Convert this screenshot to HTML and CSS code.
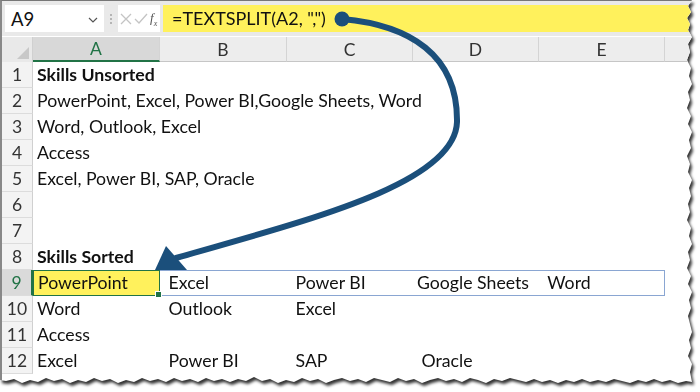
FILE: index.html
```html
<!DOCTYPE html>
<html>
<head>
<meta charset="utf-8">
<link rel="stylesheet" href="styles.css">
</head>
<body>
<div class="page">
  <div class="sheet">
    <div class="topbar">
      <div class="namebox"><span class="ref">A9</span><svg class="chev" width="10" height="6" viewBox="0 0 10 6"><path d="M1 1 L5 5 L9 1" fill="none" stroke="#555" stroke-width="1.2"/></svg></div>
      <div class="grip"><i></i><i></i><i></i></div>
      <div class="fxbox">
        <svg width="14" height="14" viewBox="0 0 14 14"><path d="M2 2 L12 12 M12 2 L2 12" stroke="#c4c4c4" stroke-width="1.3"/></svg>
        <svg width="16" height="14" viewBox="0 0 16 14"><path d="M2 7 L6 11 L14 2" fill="none" stroke="#c4c4c4" stroke-width="1.3"/></svg>
        <span class="fx">f<sub>x</sub></span>
      </div>
      <div class="formula">=TEXTSPLIT(A2, ",")</div>
    </div>
    <div class="grid">
      <div class="corner"></div>
      <div class="ch sel">A</div><div class="ch">B</div><div class="ch">C</div><div class="ch">D</div><div class="ch">E</div><div class="ch last"></div>

      <div class="rh">1</div><div class="c b">Skills Unsorted</div><div class="c"></div><div class="c"></div><div class="c"></div><div class="c"></div><div class="c"></div>
      <div class="rh">2</div><div class="c">PowerPoint, Excel, Power BI,Google Sheets, Word</div><div class="c"></div><div class="c"></div><div class="c"></div><div class="c"></div><div class="c"></div>
      <div class="rh">3</div><div class="c">Word, Outlook, Excel</div><div class="c"></div><div class="c"></div><div class="c"></div><div class="c"></div><div class="c"></div>
      <div class="rh">4</div><div class="c">Access</div><div class="c"></div><div class="c"></div><div class="c"></div><div class="c"></div><div class="c"></div>
      <div class="rh">5</div><div class="c">Excel, Power BI, SAP, Oracle</div><div class="c"></div><div class="c"></div><div class="c"></div><div class="c"></div><div class="c"></div>
      <div class="rh">6</div><div class="c"></div><div class="c"></div><div class="c"></div><div class="c"></div><div class="c"></div><div class="c"></div>
      <div class="rh">7</div><div class="c"></div><div class="c"></div><div class="c"></div><div class="c"></div><div class="c"></div><div class="c"></div>
      <div class="rh">8</div><div class="c b">Skills Sorted</div><div class="c"></div><div class="c"></div><div class="c"></div><div class="c"></div><div class="c"></div>
      <div class="rh rsel">9</div><div class="c active">PowerPoint</div><div class="c sp"> Excel</div><div class="c sp"> Power BI</div><div class="c sp">Google Sheets</div><div class="c sp spr"> Word</div><div class="c"></div>
      <div class="rh">10</div><div class="c">Word</div><div class="c"> Outlook</div><div class="c"> Excel</div><div class="c"></div><div class="c"></div><div class="c"></div>
      <div class="rh">11</div><div class="c">Access</div><div class="c"></div><div class="c"></div><div class="c"></div><div class="c"></div><div class="c"></div>
      <div class="rh">12</div><div class="c">Excel</div><div class="c"> Power BI</div><div class="c"> SAP</div><div class="c"> Oracle</div><div class="c"></div><div class="c"></div>
    </div>
  </div>
</div>
<svg class="arrow" width="700" height="392" viewBox="0 0 700 392">
  <path d="M342 19 C 410 25 458 55 457 122 C 455 185 300 222 176 258" fill="none" stroke="#1b4f7b" stroke-width="6" stroke-linecap="round"/>
  <circle cx="342" cy="19" r="7.5" fill="#1b4f7b"/>
  <polygon points="155,270 166,246 187,270" fill="#1b4f7b"/>
</svg>
</body>
</html>
```
FILE: styles.css
```css
html, body {
  margin: 0;
  padding: 0;
  background: #fff;
  width: 700px;
  height: 392px;
  overflow: hidden;
}
body {
  font-family: Lato, "Liberation Sans", sans-serif;
  color: #111;
}
.page {
  width: 700px;
  height: 392px;
  filter: drop-shadow(2px 3px 1.5px rgba(0,0,0,0.8));
}
.sheet {
  width: 694px;
  height: 388px;
  box-sizing: border-box;
  border-top: 1px solid #777;
  border-left: 2px solid #888;
  background: #fff;
  clip-path: polygon(0 0, 692px 0, 688px 6px, 691px 12px, 687px 18px, 690px 24px, 688px 30px, 692px 37px, 688px 44px, 690px 52px, 687px 60px, 691px 68px, 689px 76px, 692px 84px, 688px 92px, 690px 100px, 687px 108px, 691px 116px, 688px 124px, 692px 132px, 689px 140px, 691px 148px, 687px 156px, 690px 164px, 688px 172px, 692px 180px, 689px 188px, 691px 196px, 688px 204px, 690px 212px, 687px 220px, 691px 228px, 689px 236px, 692px 244px, 688px 252px, 690px 260px, 687px 268px, 691px 276px, 688px 284px, 692px 292px, 689px 300px, 691px 308px, 688px 316px, 690px 324px, 692px 332px, 689px 340px, 691px 348px, 688px 356px, 692px 364px, 690px 372px, 692px 382px, 686px 381px, 678px 383px, 670px 380px, 662px 382px, 654px 379px, 646px 382px, 638px 380px, 630px 383px, 622px 381px, 614px 379px, 606px 382px, 598px 380px, 590px 382px, 582px 379px, 574px 382px, 566px 380px, 558px 383px, 550px 380px, 542px 382px, 534px 379px, 526px 382px, 518px 380px, 510px 378px, 502px 381px, 494px 379px, 486px 383px, 478px 380px, 470px 378px, 462px 382px, 454px 379px, 446px 381px, 438px 378px, 430px 380px, 422px 383px, 414px 379px, 406px 381px, 398px 378px, 390px 382px, 382px 380px, 374px 378px, 366px 382px, 358px 379px, 350px 381px, 342px 378px, 334px 380px, 326px 383px, 318px 379px, 310px 381px, 302px 378px, 294px 382px, 286px 380px, 278px 383px, 270px 379px, 262px 381px, 254px 377px, 246px 381px, 238px 379px, 230px 382px, 222px 379px, 214px 381px, 206px 378px, 198px 382px, 190px 379px, 182px 381px, 174px 378px, 166px 382px, 158px 379px, 150px 381px, 142px 378px, 134px 382px, 126px 380px, 118px 383px, 110px 379px, 102px 381px, 94px 378px, 86px 382px, 78px 380px, 70px 383px, 62px 379px, 54px 381px, 46px 378px, 38px 382px, 30px 380px, 22px 383px, 14px 379px, 6px 381px, 0 380px);
}
.topbar {
  height: 35px;
  background: #e9e9e9;
  display: flex;
  align-items: center;
  padding: 0 0 0 3px;
  box-sizing: border-box;
}
.namebox {
  width: 99px;
  height: 27px;
  background: #fff;
  display: flex;
  align-items: center;
  justify-content: space-between;
  padding: 0 6px 0 6px;
  box-sizing: border-box;
}
.ref {
  font-size: 18.5px;
  color: #111;
}
.chev { margin-top: 2px; }
.grip {
  width: 14px;
  display: flex;
  flex-direction: column;
  align-items: center;
  gap: 2px;
}
.grip i {
  display: block;
  width: 2px;
  height: 2px;
  background: #b5b5b5;
}
.fxbox {
  width: 42px;
  height: 27px;
  background: #fff;
  display: flex;
  align-items: center;
  padding-left: 1px;
  box-sizing: border-box;
}
.fx {
  font-family: "Liberation Serif", serif;
  font-style: italic;
  font-size: 13px;
  color: #555;
  margin-left: 1px;
}
.fx sub { font-size: 8px; }
.formula {
  flex: 1;
  height: 27px;
  margin-left: 3px;
  background: #fff15c;
  font-size: 18px;
  line-height: 27px;
  padding-left: 9px;
  color: #111;
}
.grid {
  display: grid;
  grid-template-columns: 31px 127px 127px 126px 126px 126px 1fr;
  grid-template-rows: 25px repeat(12, 26px);
  margin-top: 1px;
}
.corner {
  background: #e9e9e9;
  position: relative;
  border-right: 1px solid #d0d0d0;
}
.corner::after {
  content: "";
  position: absolute;
  right: 3px;
  bottom: 3px;
  width: 0;
  height: 0;
  border-left: 12px solid transparent;
  border-bottom: 12px solid #c8c8c8;
}
.ch {
  background: #ededed;
  border-right: 1px solid #d4d4d4;
  border-bottom: 1px solid #c6c6c6;
  font-size: 17.5px;
  color: #333;
  display: flex;
  align-items: center;
  justify-content: center;
}
.ch.last { border-right: none; }
.ch.sel {
  background: #d8d8d8;
  color: #217346;
  border-bottom: 2px solid #217346;
}
.rh {
  background: #f3f3f3;
  border-bottom: 1px solid #dcdcdc;
  border-right: 1px solid #d0d0d0;
  font-size: 17.5px;
  color: #333;
  display: flex;
  align-items: center;
  justify-content: center;
  box-sizing: border-box;
}
.rh.rsel {
  background: #dadada;
  color: #217346;
  border-right: 2px solid #217346;
}
.c {
  font-size: 17.7px;
  line-height: 26px;
  padding-left: 4px;
  white-space: pre;
  overflow: visible;
  color: #111;
}
.b { font-weight: 700; }
.active {
  background: #fff15c;
  border: 1px solid #217346;
  line-height: 24px;
  position: relative;
}
.active::after {
  content: "";
  position: absolute;
  right: -3px;
  bottom: -3px;
  width: 5px;
  height: 5px;
  background: #217346;
  border: 1px solid #fff;
}
.sp {
  border-top: 1px solid #8aa6d2;
  border-bottom: 1px solid #8aa6d2;
  line-height: 24px;
}
.spr { border-right: 1px solid #8aa6d2; }
.arrow {
  position: absolute;
  left: 0;
  top: 0;
  pointer-events: none;
}
```
